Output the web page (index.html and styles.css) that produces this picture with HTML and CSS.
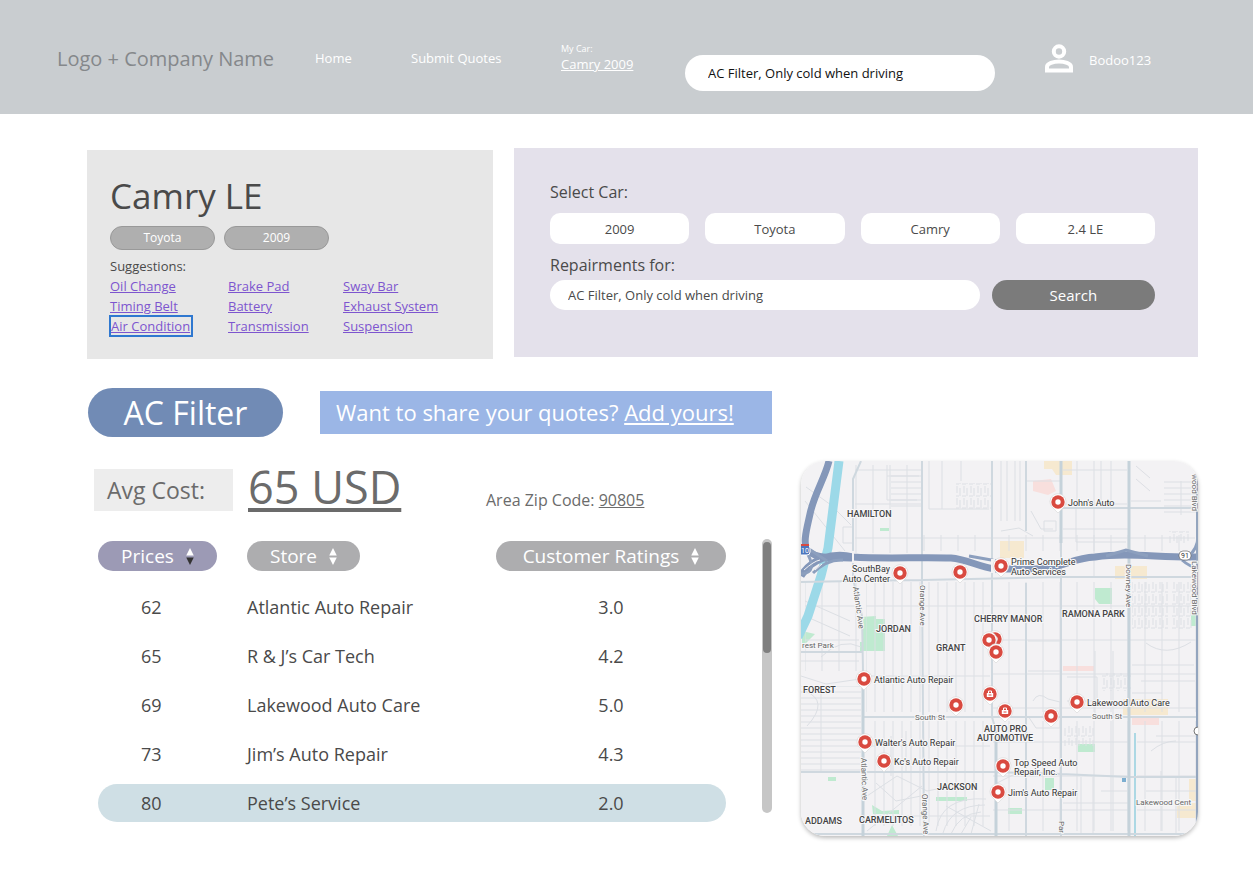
FILE: index.html
```html
<!DOCTYPE html>
<html lang="en">
<head>
<meta charset="utf-8">
<meta name="viewport" content="width=device-width, initial-scale=1">
<title>Repair Quotes</title>
<link rel="stylesheet" href="styles.css">
</head>
<body>
<header class="topbar">
  <span class="brand">Logo + Company Name</span>
  <nav class="nav">
    <a href="#home">Home</a>
    <a href="#submit">Submit Quotes</a>
    <div class="mycar"><small id="mycar">My Car:</small><a href="#car" aria-describedby="mycar">Camry 2009</a></div>
  </nav>
  <input class="topsearch" type="text" aria-label="Search repairs" value="AC Filter, Only cold when driving">
  <a class="user" href="#account">
    <svg viewBox="0 0 28 29" aria-hidden="true"><g fill="none" stroke="#fff" stroke-width="4"><circle cx="14" cy="7.500" r="5.200"/><path d="M2 26.500V23c0-3.500 6.500-5.500 12-5.500s12 2 12 5.500v3.500z"/></g></svg>
    <span>Bodoo123</span>
  </a>
</header>

<main class="page">
  <div class="panels">
    <section class="car">
      <h1>Camry LE</h1>
      <div class="tags"><span>Toyota</span><span>2009</span></div>
      <p>Suggestions:</p>
      <div class="links">
        <a href="#oil">Oil Change</a><a href="#brake">Brake Pad</a><a href="#sway">Sway Bar</a>
        <a href="#belt">Timing Belt</a><a href="#battery">Battery</a><a href="#exhaust">Exhaust System</a>
        <a class="current" href="#air">Air Condition</a><a href="#trans">Transmission</a><a href="#susp">Suspension</a>
      </div>
    </section>
    <form class="finder">
      <label for="year">Select Car:</label>
      <div class="selects">
        <select id="year"><option>2009</option></select>
        <select aria-label="Make"><option>Toyota</option></select>
        <select aria-label="Model"><option>Camry</option></select>
        <select aria-label="Trim"><option>2.4 LE</option></select>
      </div>
      <label for="repair">Repairments for:</label>
      <div class="query">
        <input id="repair" type="text" value="AC Filter, Only cold when driving">
        <button type="button">Search</button>
      </div>
    </form>
  </div>

  <div class="results">
    <div class="heading">
      <h2>AC Filter</h2>
      <p class="share">Want to share your quotes? <a href="#add">Add yours!</a></p>
    </div>

    <section class="quotes">
      <div class="cost">
        <span class="cost-label">Avg Cost:</span>
        <span class="cost-value"><u>65 USD</u></span>
        <span class="zip">Area Zip Code: <a href="#zip">90805</a></span>
      </div>
      <div class="list">
        <table>
          <thead>
            <tr>
              <th class="c-price"><button class="sort prices" type="button">Prices <svg viewBox="0 0 8 18" aria-hidden="true"><path fill="#fff" d="M4 0l4 8H0z"/><path fill="#333" d="M4 18l4-8H0z"/></svg></button></th>
              <th><button class="sort store" type="button">Store <svg viewBox="0 0 8 18" aria-hidden="true"><path fill="#fff" d="M4 0l4 8H0zM4 18l4-8H0z"/></svg></button></th>
              <th class="c-rate"><button class="sort rate" type="button">Customer Ratings <svg viewBox="0 0 8 18" aria-hidden="true"><path fill="#fff" d="M4 0l4 8H0zM4 18l4-8H0z"/></svg></button></th>
            </tr>
          </thead>
          <tbody>
            <tr><td>62</td><td>Atlantic Auto Repair</td><td>3.0</td></tr>
            <tr><td>65</td><td>R &amp; J’s Car Tech</td><td>4.2</td></tr>
            <tr><td>69</td><td>Lakewood Auto Care</td><td>5.0</td></tr>
            <tr><td>73</td><td>Jim’s Auto Repair</td><td>4.3</td></tr>
            <tr class="selected"><td>80</td><td>Pete’s Service</td><td>2.0</td></tr>
          </tbody>
        </table>
        <div class="scroll"><div class="thumb"></div></div>
      </div>
    </section>

    <svg class="map" viewBox="0 0 397 375" preserveAspectRatio="xMidYMid slice" role="img" aria-label="Map of repair shops">
      <defs>
        <pattern id="cols" width="9" height="70" patternUnits="userSpaceOnUse"><path class="lane" d="M2 0V70M0 5H9"/></pattern>
        <pattern id="wide" width="17" height="34" patternUnits="userSpaceOnUse"><path class="lane" d="M4 0V34M0 9H17"/></pattern>
        <pattern id="rows" width="60" height="6" patternUnits="userSpaceOnUse"><path class="lane" d="M0 3H60M20 0V6"/></pattern>
        <pattern id="dash" width="7" height="12" patternUnits="userSpaceOnUse"><path class="lane" d="M2 1V8M5 3V11M0 11H4"/></pattern>
        <g id="pin">
          <path fill="#fff" d="M0 11L-6 5A8 8 0 1 1 6 5z" stroke="#cfcfcf" stroke-width=".5"/>
          <circle r="6.700" fill="#d94a40"/><circle r="2.700" fill="#fff"/>
        </g>
        <g id="bag">
          <path fill="#fff" d="M0 11L-6 5A8 8 0 1 1 6 5z" stroke="#cfcfcf" stroke-width=".5"/>
          <circle r="6.700" fill="#d94a40"/><path fill="#fff" d="M-3.200-1H3.200V3H-3.200z"/><path fill="none" stroke="#fff" d="M-1.500-1V-3h3v2"/><path stroke="#d94a40" d="M-1.500 1h3"/>
        </g>
      </defs>
      <rect width="397" height="375" fill="#f3f2f4"/>

      <path fill="#f6e9d0" d="M243 0h28v14h-16l-4-6h-8zM199 80h24v17h-24zM314 105h32v13h-32zM322 238h45v16h-45zM388 318h9v22h-9zM376 342h21v15h-21z"/>
      <path fill="#f8dfdd" d="M232 20l18-2 5 12-8 4-15-4zM262 205h31v5h-31zM331 256h27v8h-27z"/>
      <path fill="#bfead0" d="M60 156l15-1v3h9v32H59v-9h3zM294 127h17v16h-13l-4-5zM390 152h5v13h-5zM277 283h17v8h-17zM244 317h9v12h-9zM207 347h14v6h-14zM27 316h8v4h-8zM135 336h31v4h-31zM71 344l10 6 17-1v4H72zM86 375l5-11 6 11zM1 170l13 3-13 13zM79 67h9v3h-9z"/>

      <path fill="url(#cols)" d="M65 121h124v130H65zM66 260h123v105H66z"/>
      <path fill="url(#rows)" d="M0 225h60v85H0zM90 12h30v38H90zM363 20h32v34h-32z"/>
      <path fill="url(#wide)" d="M54 4h66v88H54zM54 74h340v16H54zM192 121h204v130H192zM192 260h135v110H192zM336 260h60v110h-60zM4 120h54v90H4zM262 0h64v45h-64z"/>
      <path fill="url(#dash)" d="M155 22h37v26h-37zM331 120h36v48h-36zM370 120h22v48h-22zM263 265h30v20h-30zM300 212h30v18h-30zM368 70h20v12h-20z"/>
      <path class="lane" d="M86 4v35h30M86 15h32M128 0v48h60M141 0v48M160 0v20M200 0v60M206 0v60M214 0v60M219 0v60M225 20h34M243 60h12v10h-12zM230 50l10 18h12M200 70l18-3 14 8M335 5l14 12M335 18l14 12M330 40h30M300 0v46M262 68h65M293 47v70M275 47v34h50M4 40l40 50M42 66h10v16H42zM4 140l45 20M4 155l45 20M0 200h58M0 215l25 8 34-5M4 230q25 10 2 35M66 370l55-45M66 335l30-20 30 15 40-8M135 370q5-35 50-32M142 372q8-28 42-28M150 373q8-20 30-22M160 373l10-17M170 373l8-30M145 345l45 25M355 275h40M350 290q12-10 25-10M360 310v60M375 316v56M345 330h50M227 180h33M227 210h32M266 216h30v24h-30M232 240q5-10 15-2l12 3v26h-24l-8-12M294 190v66M312 190v180M345 182q20 15 45-1"/>
      <path class="lane" d="M5 26l25 18 20 20M20 196q20-20 40-10M90 275v40M105 270v40M75 322l20 18 25-5M196 322l20-10M292 316v56M280 316v56M300 330h26M262 342h65M340 220h54M331 204h62M331 232h30"/>

      <path class="river" d="M38 0L27 87 20 115 7 155-3 176"/>
      <path fill="none" stroke="#acd8e4" stroke-width="2" d="M334 272V375"/>
      <path class="road" d="M60 0L52 18V118L61 155 62 210V375M121 0V118L122 250 123 375M191 0V256L195 270V375M225 0V70M225 122V375M260 0V375M328 0V375M0 121L54 120 122 119 260 116H397M62 256H397M0 311H195L260 313 328 316H397M260 47H397M0 373H397M0 191H62"/>
      <path class="major" d="M260 0V82M62 210V375M328 0V375M195 270V375"/>
      <path class="freeway" d="M28 0C24 17 13 33 9 53 6 67 1 83 7 90 17 99 38 96 52 97"/>
      <path class="freeway" d="M0 115C10 98 31 91 52 96 80 98 120 96 150 97 166 98 177 106 195 108H230C260 109 269 97 294 96 327 91 359 97 397 96"/>
      <path class="ramp" d="M5 90Q18 112 0 113M8 88l18 12M12 112Q26 98 42 99M305 95l20-6 22 6M168 95l28 5M381 99q9 8 16 7M386 96q11-7 11-22V20"/>
      <path class="edge" d="M396 0V375"/>
      <path fill="#f3f2f4" d="M51 90h2v12h-2zM190 98h4v14h-4z"/>
      <path stroke="#f3f2f4" stroke-width="1" fill="none" d="M3 109q10-9 16-10M14 109l7-6"/>

      <rect x="-8" y="84" width="17" height="10" rx="3" fill="#4d76bd" stroke="#fff"/><path stroke="#d94a40" stroke-width="2" d="M0 84h8"/>
      <text class="shield" x="0" y="92">10</text>
      <rect x="378" y="90" width="12" height="9" rx="4" fill="#fff" stroke="#555" stroke-width=".6"/><text class="num" x="384" y="97">91</text>
      <circle cx="397" cy="270" r="4" fill="#fff" stroke="#777"/>
      <rect x="321" y="317" width="4" height="4" fill="#7caed0"/>

      <g class="district">
        <text x="46" y="56">HAMILTON</text><text x="75" y="171">JORDAN</text><text x="135" y="190">GRANT</text>
        <text x="173" y="161">CHERRY MANOR</text><text x="261" y="156">RAMONA PARK</text><text x="2" y="232">FOREST</text>
        <text x="136" y="329">JACKSON</text><text x="4" y="363">ADDAMS</text><text x="58" y="362">CARMELITOS</text>
        <text x="183" y="271">AUTO PRO</text><text x="176" y="280">AUTOMOTIVE</text>
      </g>
      <g class="street">
        <text x="114" y="259">South St</text><text x="291" y="258">South St</text>
        <text x="1" y="187">rest Park</text><text x="335" y="344">Lakewood Cent</text>
        <text transform="translate(52 126) rotate(82)">Atlantic Ave</text><text transform="translate(60 297) rotate(88)">Atlantic Ave</text>
        <text transform="translate(119 124) rotate(90)">Orange Ave</text><text transform="translate(121 333) rotate(88)">Orange Ave</text>
        <text transform="translate(325 103) rotate(90)">Downey Ave</text><text transform="translate(258 360) rotate(90)">Par</text>
        <text transform="translate(391 13) rotate(90)">wood Blvd</text><text transform="translate(391 100) rotate(90)">Lakewood Blvd</text>
      </g>
      <g>
        <use href="#pin" x="257" y="41"/><use href="#pin" x="200" y="105"/><use href="#pin" x="159" y="111"/><use href="#pin" x="99" y="112"/>
        <use href="#pin" x="194" y="178"/><use href="#pin" x="188" y="179"/><use href="#pin" x="195" y="191"/><use href="#pin" x="63" y="218"/>
        <use href="#pin" x="155" y="244"/><use href="#bag" x="189" y="233"/><use href="#bag" x="204" y="250"/><use href="#pin" x="250" y="255"/>
        <use href="#pin" x="276" y="241"/><use href="#pin" x="64" y="281"/><use href="#pin" x="83" y="300"/><use href="#pin" x="202" y="305"/><use href="#pin" x="197" y="331"/>
      </g>
      <g class="shop">
        <text x="267" y="45">John's Auto</text><text x="210" y="104">Prime Complete</text><text x="210" y="114">Auto Services</text>
        <text class="end" x="89" y="111">SouthBay</text><text class="end" x="89" y="121">Auto Center</text>
        <text x="73" y="222">Atlantic Auto Repair</text><text x="286" y="245">Lakewood Auto Care</text>
        <text x="74" y="285">Walter's Auto Repair</text><text x="93" y="304">Kc's Auto Repair</text>
        <text x="213" y="305">Top Speed Auto</text><text x="213" y="314">Repair, Inc.</text><text x="207" y="335">Jim's Auto Repair</text>
      </g>
    </svg>
  </div>
</main>
</body>
</html>
```
FILE: styles.css
```css
* { box-sizing: border-box; }

body {
  margin: 0;
  background: #fff;
  color: #4a4a4a;
  font-family: "Open Sans", "Noto Sans", sans-serif;
  font-size: 13px;
}

h1, h2, p { margin: 0; font-weight: 400; }
button, input, select { border: 0; margin: 0; font: inherit; color: inherit; }
a { color: inherit; }

/* Header */
.topbar {
  display: grid;
  grid-template-columns: 258fr 370fr 310fr 158fr;
  padding: 2px 100px 0 57px;
  min-height: 114px;
  align-items: center;
  background: #c9cdd0;
  color: #fff;
}
.brand { color: #85888b; font-size: 20px; white-space: nowrap; }
.nav { display: grid; grid-template-columns: 96fr 150fr 124fr; align-items: center; white-space: nowrap; }
.nav > a { text-decoration: none; }
.mycar { display: grid; }
.mycar small { font-size: 9px; line-height: 12px; }
.mycar a { line-height: 18px; }
.topsearch {
  width: 100%;
  height: 36px;
  margin-top: 30px;
  padding: 0 23px;
  border-radius: 18px;
  background: #fff;
  color: #111;
}
.user { display: flex; align-items: center; gap: 16px; padding-left: 50px; text-decoration: none; }
.user svg { width: 28px; height: 29px; flex: none; }
.user span { padding-top: 3px; }

/* Car and search panels */
.page { padding: 34px 55px 40px 87px; }
.panels { display: grid; grid-template-columns: 406fr 684fr; gap: 21px; }
.car { margin-top: 2px; padding: 20px 23px; min-height: 209px; background: #e7e7e7; }
.car h1 { font-size: 35px; line-height: 52px; }
.tags { display: flex; gap: 9px; margin-top: 4px; }
.tags span {
  width: 105px;
  border: 1px solid #999;
  border-radius: 12px;
  background: #afafaf;
  color: #fff;
  font-size: 12px;
  line-height: 22px;
  text-align: center;
}
.car p { margin-top: 6px; line-height: 20px; }
.links {
  display: grid;
  grid-template-columns: 118fr 115fr 127fr;
  justify-items: start;
  color: #7d55cf;
  line-height: 20px;
  white-space: nowrap;
}
.current { outline: 2px solid #2f78d0; outline-offset: -1px; padding: 0 2px 0 1px; }

.finder { min-height: 209px; margin-bottom: 2px; padding: 32px 43px 20px 36px; background: #e4e1eb; }
.finder label { display: block; font-size: 16px; line-height: 24px; }
.selects { display: grid; grid-template-columns: repeat(4, 1fr); gap: 16px; margin: 9px 0; }
.selects select {
  appearance: none;
  height: 31px;
  border-radius: 10px;
  background: #fff;
  text-align: center;
  text-align-last: center;
}
.query { display: grid; grid-template-columns: 429fr 163fr; gap: 12px; margin-top: 3px; }
.query input { width: 100%; height: 30px; padding: 0 18px; border-radius: 15px; background: #fff; }
.query button { border-radius: 15px; background: #7b7b7b; color: #fff; font-size: 15px; }

/* Results */
.results { display: grid; grid-template-columns: 685fr 397fr; column-gap: 29px; margin-top: 29px; }
.heading { display: flex; align-items: center; gap: 37px; margin-bottom: 24px; padding-left: 1px; }
.heading h2 {
  width: 195px;
  border-radius: 25px;
  background: #718bb5;
  color: #fff;
  font-size: 32px;
  line-height: 49px;
  text-align: center;
}
.share { flex: 1; padding-left: 16px; background: #9bb6e6; color: #fff; font-size: 22px; line-height: 43px; white-space: nowrap; }
.quotes { grid-column: 1; }
.cost { display: flex; align-items: flex-start; height: 67px; padding-left: 7px; color: #6b6b6b; white-space: nowrap; }
.cost-label { width: 139px; margin-top: 8px; padding-left: 13px; background: #ededed; font-size: 23px; line-height: 42px; }
.cost-value { width: 253px; padding-left: 15px; font-size: 45px; line-height: 52px; }
.cost-value u { text-underline-offset: 4px; }
.zip { margin-top: 28px; font-size: 16px; line-height: 22px; }

.list { display: flex; justify-content: space-between; align-items: flex-start; padding-left: 11px; }
table { flex: 1; margin-right: 36px; border-collapse: separate; border-spacing: 0 11px; table-layout: fixed; font-size: 18px; }
th, td { padding: 0; text-align: left; font-weight: 400; }
th { height: 38px; padding-bottom: 6px; vertical-align: bottom; }
td { height: 38px; line-height: 38px; }
td:first-child { padding-left: 43px; }
td:last-child { text-align: center; }
.c-price { width: 149px; }
.c-rate { width: 230px; }
.sort {
  display: flex;
  align-items: center;
  justify-content: center;
  gap: 12px;
  height: 30px;
  border-radius: 15px;
  background: #adadaf;
  color: #fff;
  font-size: 19px;
}
.sort svg { width: 8px; height: 17px; }
.prices { width: 119px; background: #9c9ab5; }
.store { width: 113px; }
.rate { width: 100%; }
.selected td { background: #cfdfe5; }
.selected td:first-child { border-radius: 19px 0 0 19px; }
.selected td:last-child { border-radius: 0 19px 19px 0; }
.scroll { width: 10px; height: 274px; margin-top: 11px; padding: 3px 1px; border-radius: 5px; background: #c6c6c6; }
.thumb { height: 111px; border-radius: 4px; background: #7f7f7f; }

/* Map */
.map { width: 100%; border-radius: 24px; box-shadow: 0 2px 4px #bbb; font-family: Roboto, sans-serif; font-size: 8px; }
.lane { fill: none; stroke: #dcdfe4; stroke-width: 1; }
.road { fill: none; stroke: #cfd8df; stroke-width: 2; }
.major { fill: none; stroke: #c5d2da; stroke-width: 3; }
.river { fill: none; stroke: #9cd9e8; stroke-width: 9; }
.freeway { fill: none; stroke: #8497b9; stroke-width: 7; }
.ramp { fill: none; stroke: #8c9fbe; stroke-width: 3; }
.edge { fill: none; stroke: #93a5be; stroke-width: 2; }
.district { font-size: 9px; font-weight: 500; fill: #444; }
.street { fill: #666; }
.shop { font-size: 9px; fill: #333; }
.district, .street, .shop { paint-order: stroke; stroke: #f7f7f8; stroke-width: 2; }
.end { text-anchor: end; }
.shield { fill: #fff; font-size: 7px; }
.num { fill: #333; font-size: 7px; text-anchor: middle; }
```
